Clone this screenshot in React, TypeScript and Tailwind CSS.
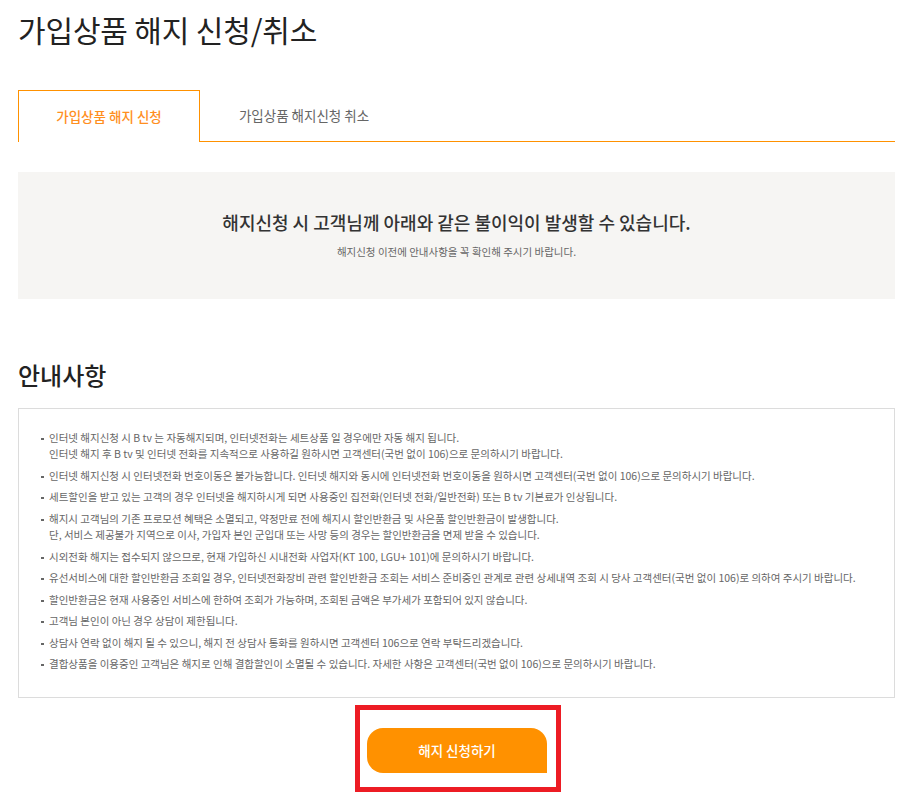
const font = { fontFamily: '"Noto Sans CJK KR", "Noto Sans", sans-serif' }

const notices = [
  ['인터넷 해지신청 시 B tv 는 자동해지되며, 인터넷전화는 세트상품 일 경우에만 자동 해지 됩니다.', '인터넷 해지 후 B tv 및 인터넷 전화를 지속적으로 사용하길 원하시면 고객센터(국번 없이 106)으로 문의하시기 바랍니다.'],
  ['인터넷 해지신청 시 인터넷전화 번호이동은 불가능합니다. 인터넷 해지와 동시에 인터넷전화 번호이동을 원하시면 고객센터(국번 없이 106)으로 문의하시기 바랍니다.'],
  ['세트할인을 받고 있는 고객의 경우 인터넷을 해지하시게 되면 사용중인 집전화(인터넷 전화/일반전화) 또는 B tv 기본료가 인상됩니다.'],
  ['해지시 고객님의 기존 프로모션 혜택은 소멸되고, 약정만료 전에 해지시 할인반환금 및 사은품 할인반환금이 발생합니다.', '단, 서비스 제공불가 지역으로 이사, 가입자 본인 군입대 또는 사망 등의 경우는 할인반환금을 면제 받을 수 있습니다.'],
  ['시외전화 해지는 접수되지 않으므로, 현재 가입하신 시내전화 사업자(KT 100, LGU+ 101)에 문의하시기 바랍니다.'],
  ['유선서비스에 대한 할인반환금 조회일 경우, 인터넷전화장비 관련 할인반환금 조회는 서비스 준비중인 관계로 관련 상세내역 조회 시 당사 고객센터(국번 없이 106)로 의하여 주시기 바랍니다.'],
  ['할인반환금은 현재 사용중인 서비스에 한하여 조회가 가능하며, 조회된 금액은 부가세가 포함되어 있지 않습니다.'],
  ['고객님 본인이 아닌 경우 상담이 제한됩니다.'],
  ['상담사 연락 없이 해지 될 수 있으니, 해지 전 상담사 통화를 원하시면 고객센터 106으로 연락 부탁드리겠습니다.'],
  ['결합상품을 이용중인 고객님은 해지로 인해 결합할인이 소멸될 수 있습니다. 자세한 사항은 고객센터(국번 없이 106)으로 문의하시기 바랍니다.'],
]

export default function App() {
  return (
    <div className="w-[918px] h-[792px] overflow-hidden bg-white px-[18px]" style={font}>
      <h1 className="h-[90px] pt-[7px] text-[30px] leading-[44px] font-normal tracking-[-0.15px] text-[#222]">가입상품 해지 신청/취소</h1>

      {/* Tabs */}
      <div className="flex w-[877px] h-[52px] border-b border-[#ff9100]">
        <div className="w-[182px] h-[52px] pb-[1px] border border-b-0 border-[#ff9100] bg-white flex items-center justify-center text-[13.5px] font-medium text-[#ff8f1f]">
          가입상품 해지 신청
        </div>
        <div className="w-[208px] pb-[1px] flex items-center justify-center text-[13.5px] text-[#666]">
          가입상품 해지신청 취소
        </div>
      </div>

      {/* Warning */}
      <div className="mt-[30px] w-[877px] h-[127px] bg-[#f6f5f3] flex flex-col items-center pt-[37px]">
        <p className="text-[18px] leading-[26px] font-medium text-[#333]">해지신청 시 고객님께 아래와 같은 불이익이 발생할 수 있습니다.</p>
        <p className="mt-[9px] text-[10.5px] leading-[16px] text-[#666]">해지신청 이전에 안내사항을 꼭 확인해 주시기 바랍니다.</p>
      </div>

      <h2 className="mt-[58px] h-[51px] text-[24px] leading-[36px] font-medium text-[#222]">안내사항</h2>

      {/* Notice */}
      <div className="w-[877px] h-[290px] border border-[#dcdcdc] pt-[20.5px] pl-[22px]">
        <ul className="flex flex-col gap-[5px]">
          {notices.map((lines, i) => (
            <li key={i} className="relative pl-[8px] text-[10.5px] leading-[16.5px] text-[#666]">
              <span className="absolute left-0 top-[8px] w-[3px] h-[2px] bg-[#666]" />
              {lines.map((line, j) => (
                <div key={j} className="whitespace-nowrap">{line}</div>
              ))}
            </li>
          ))}
        </ul>
      </div>

      {/* Submit */}
      <div className="mt-[7px] ml-[337px] w-[206px] h-[87px] border-[5px] border-[#ed1c24] pt-[18px] pl-[7px]">
        <button className="block w-[180px] h-[45px] pb-[1px] bg-[#ff9100] rounded-t-[16px] rounded-bl-[16px] text-[13.5px] font-medium text-white">
          해지 신청하기
        </button>
      </div>
    </div>
  )
}
